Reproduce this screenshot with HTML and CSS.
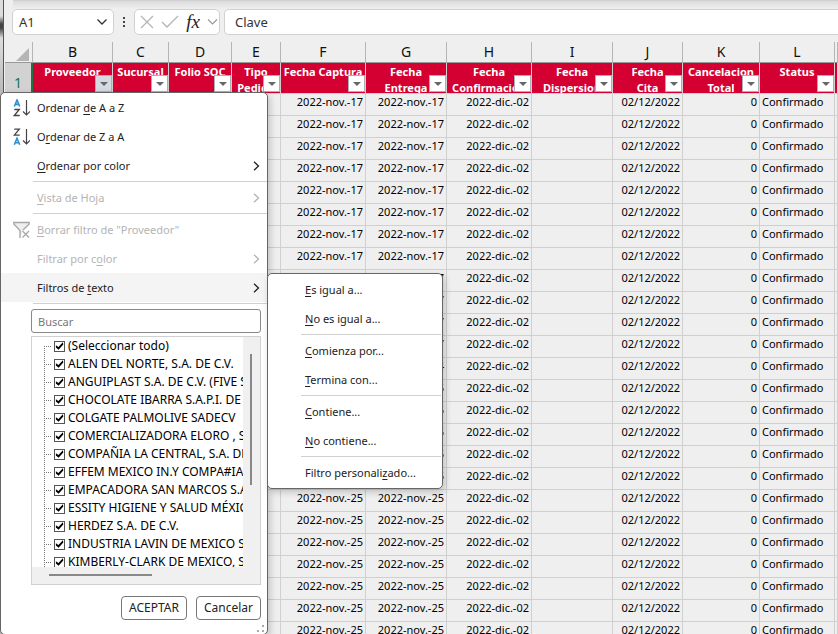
FILE: index.html
```
<!DOCTYPE html>
<html lang="es">
<head>
<meta charset="utf-8">
<title>Clave</title>
<link rel="stylesheet" href="styles.css">
</head>
<body>
<div class="backdrop"></div>
<main class="window">
  <div class="ribbon-edge"></div>
  <div class="formula-row">
    <button class="box name-box" type="button"><span>A1</span>
      <svg width="12" height="8" viewBox="0 0 12 8"><path d="M1.500 1.500 6 6l4.500-4.500" fill="none" stroke="#333" stroke-width="1.300"/></svg>
    </button>
    <svg class="dots" width="4" height="12" viewBox="0 0 4 12"><path d="M1 1h2v2H1zM1 5h2v2H1zM1 9h2v2H1z" fill="#444"/></svg>
    <div class="box fx-box">
      <button type="button" aria-label="Cancelar entrada"><svg width="14" height="14" viewBox="0 0 14 14"><path d="M1 1l12 12M13 1L1 13" stroke="#b4b4b4" stroke-width="1.200"/></svg></button>
      <button type="button" aria-label="Introducir"><svg width="18" height="14" viewBox="0 0 18 14"><path d="M1 7l5 5L17 1" fill="none" stroke="#b4b4b4" stroke-width="1.300"/></svg></button>
      <button type="button" class="fx"><i>fx</i></button>
      <button type="button" aria-label="Más funciones"><svg width="11" height="8" viewBox="0 0 11 8"><path d="M1 1.500l4.500 4.500L10 1.500" fill="none" stroke="#999" stroke-width="1.200"/></svg></button>
    </div>
    <input class="box formula" type="text" value="Clave" aria-label="Barra de fórmulas">
  </div>

  <table class="sheet">
    <colgroup><col class="w28"><col class="w80"><col class="w56"><col class="w63"><col class="w49"><col class="w85"><col class="w81"><col class="w85"><col class="w81"><col class="w70"><col class="w77"><col class="w75"><col></colgroup>
    <thead>
      <tr class="letters"><th><svg class="corner" width="13" height="13" viewBox="0 0 13 13"><path d="M13 0v13H0z" fill="#b5b5b5"/></svg></th><th>B</th><th>C</th><th>D</th><th>E</th><th>F</th><th>G</th><th>H</th><th>I</th><th>J</th><th>K</th><th>L</th><th></th></tr>
      <tr class="titles">
        <th class="rownum">1</th>
        <th><div>Proveedor<button type="button" class="drop active" aria-label="Filtrar"></button></div></th>
        <th><div>Sucursal<button type="button" class="drop" aria-label="Filtrar"></button></div></th>
        <th><div>Folio SOC<button type="button" class="drop" aria-label="Filtrar"></button></div></th>
        <th><div>Tipo<br>Pedido<button type="button" class="drop" aria-label="Filtrar"></button></div></th>
        <th><div>Fecha Captura<button type="button" class="drop" aria-label="Filtrar"></button></div></th>
        <th><div>Fecha<br>Entrega<button type="button" class="drop" aria-label="Filtrar"></button></div></th>
        <th><div>Fecha<br>Confirmacion<button type="button" class="drop" aria-label="Filtrar"></button></div></th>
        <th><div>Fecha<br>Dispersion<button type="button" class="drop" aria-label="Filtrar"></button></div></th>
        <th><div>Fecha<br>Cita<button type="button" class="drop" aria-label="Filtrar"></button></div></th>
        <th><div>Cancelacion<br>Total<button type="button" class="drop" aria-label="Filtrar"></button></div></th>
        <th><div>Status<button type="button" class="drop" aria-label="Filtrar"></button></div></th>
        <th></th>
      </tr>
    </thead>
    <tbody>
      <tr><td><td><td><td><td><td>2022-nov.-17<td>2022-nov.-17<td>2022-dic.-02<td><td>02/12/2022<td>0<td>Confirmado<td></tr>
      <tr><td><td><td><td><td><td>2022-nov.-17<td>2022-nov.-17<td>2022-dic.-02<td><td>02/12/2022<td>0<td>Confirmado<td></tr>
      <tr><td><td><td><td><td><td>2022-nov.-17<td>2022-nov.-17<td>2022-dic.-02<td><td>02/12/2022<td>0<td>Confirmado<td></tr>
      <tr><td><td><td><td><td><td>2022-nov.-17<td>2022-nov.-17<td>2022-dic.-02<td><td>02/12/2022<td>0<td>Confirmado<td></tr>
      <tr><td><td><td><td><td><td>2022-nov.-17<td>2022-nov.-17<td>2022-dic.-02<td><td>02/12/2022<td>0<td>Confirmado<td></tr>
      <tr><td><td><td><td><td><td>2022-nov.-17<td>2022-nov.-17<td>2022-dic.-02<td><td>02/12/2022<td>0<td>Confirmado<td></tr>
      <tr><td><td><td><td><td><td>2022-nov.-17<td>2022-nov.-17<td>2022-dic.-02<td><td>02/12/2022<td>0<td>Confirmado<td></tr>
      <tr><td><td><td><td><td><td>2022-nov.-17<td>2022-nov.-17<td>2022-dic.-02<td><td>02/12/2022<td>0<td>Confirmado<td></tr>
      <tr><td><td><td><td><td><td><td>2022-nov.-17<td>2022-dic.-02<td><td>02/12/2022<td>0<td>Confirmado<td></tr>
      <tr><td><td><td><td><td><td><td>2022-nov.-17<td>2022-dic.-02<td><td>02/12/2022<td>0<td>Confirmado<td></tr>
      <tr><td><td><td><td><td><td><td>2022-nov.-17<td>2022-dic.-02<td><td>02/12/2022<td>0<td>Confirmado<td></tr>
      <tr><td><td><td><td><td><td><td>2022-nov.-17<td>2022-dic.-02<td><td>02/12/2022<td>0<td>Confirmado<td></tr>
      <tr><td><td><td><td><td><td><td>2022-nov.-24<td>2022-dic.-02<td><td>02/12/2022<td>0<td>Confirmado<td></tr>
      <tr><td><td><td><td><td><td><td>2022-nov.-25<td>2022-dic.-02<td><td>02/12/2022<td>0<td>Confirmado<td></tr>
      <tr><td><td><td><td><td><td><td>2022-nov.-25<td>2022-dic.-02<td><td>02/12/2022<td>0<td>Confirmado<td></tr>
      <tr><td><td><td><td><td><td><td>2022-nov.-25<td>2022-dic.-02<td><td>02/12/2022<td>0<td>Confirmado<td></tr>
      <tr><td><td><td><td><td><td><td>2022-nov.-25<td>2022-dic.-02<td><td>02/12/2022<td>0<td>Confirmado<td></tr>
      <tr><td><td><td><td><td><td><td>2022-nov.-25<td>2022-dic.-02<td><td>02/12/2022<td>0<td>Confirmado<td></tr>
      <tr><td><td><td><td><td><td>2022-nov.-25<td>2022-nov.-25<td>2022-dic.-02<td><td>02/12/2022<td>0<td>Confirmado<td></tr>
      <tr><td><td><td><td><td><td>2022-nov.-25<td>2022-nov.-25<td>2022-dic.-02<td><td>02/12/2022<td>0<td>Confirmado<td></tr>
      <tr><td><td><td><td><td><td>2022-nov.-25<td>2022-nov.-25<td>2022-dic.-02<td><td>02/12/2022<td>0<td>Confirmado<td></tr>
      <tr><td><td><td><td><td><td>2022-nov.-25<td>2022-nov.-25<td>2022-dic.-02<td><td>02/12/2022<td>0<td>Confirmado<td></tr>
      <tr><td><td><td><td><td><td>2022-nov.-25<td>2022-nov.-25<td>2022-dic.-02<td><td>02/12/2022<td>0<td>Confirmado<td></tr>
      <tr><td><td><td><td><td><td>2022-nov.-25<td>2022-nov.-25<td>2022-dic.-02<td><td>02/12/2022<td>0<td>Confirmado<td></tr>
      <tr><td><td><td><td><td><td>2022-nov.-25<td>2022-nov.-25<td>2022-dic.-02<td><td>02/12/2022<td>0<td>Confirmado<td></tr>
    </tbody>
  </table>
</main>

<section class="popup filter-menu">
  <button type="button" class="item"><svg class="icon" width="17" height="18" viewBox="0 0 17 18"><path d="M1.300 7.500 4 1l2.700 6.500M2.200 5.400h3.600" fill="none" stroke="#2b8fd0" stroke-width="1.600"/><path d="M1.300 10.500h5L1.300 16.500h5.400" fill="none" stroke="#444" stroke-width="1.300"/><path d="M13.500 1v15M10 12.500l3.500 3.500 3.500-3.500" fill="none" stroke="#444" stroke-width="1.200"/></svg><span>Ordenar <u>d</u>e A a Z</span></button>
  <button type="button" class="item"><svg class="icon" width="17" height="18" viewBox="0 0 17 18"><path d="M1.300 1.200h5L1.300 7.200h5.400" fill="none" stroke="#444" stroke-width="1.300"/><path d="M1.300 16.800 4 10.300l2.700 6.500M2.200 14.700h3.600" fill="none" stroke="#2b8fd0" stroke-width="1.600"/><path d="M13.500 1v15M10 12.500l3.500 3.500 3.500-3.500" fill="none" stroke="#444" stroke-width="1.200"/></svg><span>O<u>r</u>denar de Z a A</span></button>
  <button type="button" class="item"><span><u>O</u>rdenar por color</span><svg class="more" width="7" height="10" viewBox="0 0 7 10"><path d="M1 .8 5.500 5 1 9.200" fill="none" stroke="currentColor" stroke-width="1.300"/></svg></button>
  <hr>
  <button type="button" class="item" disabled><span><u>V</u>ista de Hoja</span><svg class="more" width="7" height="10" viewBox="0 0 7 10"><path d="M1 .8 5.500 5 1 9.200" fill="none" stroke="currentColor" stroke-width="1.300"/></svg></button>
  <hr>
  <button type="button" class="item" disabled><svg class="icon" width="17" height="18" viewBox="0 0 17 18"><path d="M7 17V9.500L.8 3V1.500h15.400V3L10 9" fill="#eee" stroke="#a6a6a6" stroke-width="1.300"/><path d="M9.500 10l6.500 6.500M16 10l-6.500 6.500" fill="none" stroke="#a6a6a6" stroke-width="1.200"/></svg><span><u>B</u>orrar filtro de "Proveedor"</span></button>
  <button type="button" class="item" disabled><span>Filtrar por c<u>o</u>lor</span><svg class="more" width="7" height="10" viewBox="0 0 7 10"><path d="M1 .8 5.500 5 1 9.200" fill="none" stroke="currentColor" stroke-width="1.300"/></svg></button>
  <button type="button" class="item current"><span>Filtros de <u>t</u>exto</span><svg class="more" width="7" height="10" viewBox="0 0 7 10"><path d="M1 .8 5.500 5 1 9.200" fill="none" stroke="currentColor" stroke-width="1.300"/></svg></button>
  <hr>
  <div class="values">
    <input class="search" type="text" placeholder="Buscar" aria-label="Buscar">
    <div class="list">
      <div class="tree">
        <label><input type="checkbox" checked>(Seleccionar todo)</label>
        <label><input type="checkbox" checked>ALEN DEL NORTE, S.A. DE C.V.</label>
        <label><input type="checkbox" checked>ANGUIPLAST S.A. DE C.V. (FIVE STAR)</label>
        <label><input type="checkbox" checked>CHOCOLATE IBARRA S.A.P.I. DE C.V.</label>
        <label><input type="checkbox" checked>COLGATE PALMOLIVE SADECV</label>
        <label><input type="checkbox" checked>COMERCIALIZADORA ELORO , S.A.</label>
        <label><input type="checkbox" checked>COMPAÑIA LA CENTRAL, S.A. DE C.V.</label>
        <label><input type="checkbox" checked>EFFEM MEXICO IN.Y COMPA#IA</label>
        <label><input type="checkbox" checked>EMPACADORA SAN MARCOS S.A.</label>
        <label><input type="checkbox" checked>ESSITY HIGIENE Y SALUD MÉXICO</label>
        <label><input type="checkbox" checked>HERDEZ S.A. DE C.V.</label>
        <label><input type="checkbox" checked>INDUSTRIA LAVIN DE MEXICO S.A.</label>
        <label><input type="checkbox" checked>KIMBERLY-CLARK DE MEXICO, S.A.</label>
      </div>
      <div class="vbar"><span></span></div>
      <div class="hbar"><span></span></div>
    </div>
    <div class="actions"><button type="button">ACEPTAR</button><button type="button">Cancelar</button></div>
  </div>
  <svg class="grip" width="8" height="8" viewBox="0 0 8 8"><path d="M5 0h2v2H5zM0 5h2v2H0zM5 5h2v2H5z" fill="#aaa"/></svg>
</section>

<section class="popup text-menu">
  <button type="button" class="item"><span><u>E</u>s igual a...</span></button>
  <button type="button" class="item"><span><u>N</u>o es igual a...</span></button>
  <hr>
  <button type="button" class="item"><span><u>C</u>omienza por...</span></button>
  <button type="button" class="item"><span><u>T</u>ermina con...</span></button>
  <hr>
  <button type="button" class="item"><span><u>C</u>ontiene...</span></button>
  <button type="button" class="item"><span><u>N</u>o contiene...</span></button>
  <hr>
  <button type="button" class="item"><span>Filtro personali<u>z</u>ado...</span></button>
</section>
</body>
</html>
```
FILE: styles.css
```
* { box-sizing: border-box; }
body {
  margin: 0;
  height: 100vh;
  overflow: hidden;
  position: relative;
  display: flex;
  background: #efefef;
  color: #111;
  font: 12px/16px "Noto Sans", "Open Sans", sans-serif;
}
button, input { font: inherit; color: inherit; margin: 0; }
button { border: 0; padding: 0; background: none; }
svg { display: block; flex: none; }

.backdrop {
  flex: none;
  width: 3px;
  background: linear-gradient(#ddd 0, #ddd 16px, #444 24px, #444 28px, #ddd 38px, #bbb 90px);
}
.window { flex: 1; min-width: 0; border-left: 1px solid #217346; padding-left: 1px; }
.ribbon-edge {
  height: 9px;
  margin-left: 8px;
  border-top: 1px solid #d0d0d0;
  background: linear-gradient(#dcdcdc, #efefef);
}
.formula-row { display: flex; align-items: center; height: 26px; padding-left: 7px; }
.box {
  height: 26px;
  border: 1px solid #d1d1d1;
  border-radius: 5px;
  background: #fff;
  display: flex;
  align-items: center;
}
.name-box { width: 102px; padding: 0 5px 0 6px; justify-content: space-between; font-size: 13px; color: #333; }
.dots { margin: 0 8px; }
.fx-box { width: 86px; padding: 0 1px 0 5px; justify-content: space-between; }
.fx { font: 19px/20px "Liberation Serif", serif; color: #222; }
.formula { flex: 1; min-width: 0; margin-left: 4px; padding: 0 10px; border-right: 0; border-radius: 5px 0 0 5px; font-size: 13px; color: #333; }

.sheet { width: 100%; margin-top: 7px; table-layout: fixed; border-collapse: separate; border-spacing: 0; }
.w28 { width: 28px; } .w80 { width: 80px; } .w56 { width: 56px; } .w63 { width: 63px; }
.w49 { width: 49px; } .w85 { width: 85px; } .w81 { width: 81px; } .w70 { width: 70px; }
.w77 { width: 77px; } .w75 { width: 75px; }
.sheet th, .sheet td { padding: 0; border-right: 1px solid #d0d0d0; border-bottom: 1px solid #d0d0d0; }
.letters th { height: 21px; font-weight: 400; font-size: 14px; line-height: 20px; border-right-color: #b5b5b5; border-bottom-color: #999; }
.corner { margin: 4px 3px 0 auto; }
.titles th { height: 31px; background: #d40032; color: #fff; font-size: 11px; font-weight: 700; vertical-align: top; }
.titles div { position: relative; height: 30px; overflow: hidden; padding-top: 1px; white-space: nowrap; display: flow-root; }
.titles .rownum {
  background: #d2d2d2;
  color: #217346;
  border-right: 2px solid #217346;
  font-size: 14px;
  font-weight: 400;
  vertical-align: bottom;
  line-height: 20px;
}
.drop {
  position: absolute;
  right: 0;
  bottom: 1px;
  width: 17px;
  height: 17px;
  border: 1px solid #abb0b8;
  background: #fff;
}
.drop.active { background: #d5d9e2; }
.drop::after {
  content: "";
  position: absolute;
  left: 4px;
  top: 6px;
  border: 4px solid transparent;
  border-top-color: #666;
  border-bottom: 0;
}
.sheet td { height: 22px; padding: 0 2px; font-size: 11px; vertical-align: top; text-align: right; white-space: nowrap; overflow: hidden; color: #000; }
.sheet td:nth-child(12) { text-align: left; }

.popup { position: absolute; background: #fff; border: 1px solid #666; border-radius: 5px; box-shadow: 2px 3px 7px #0003; }
.item {
  display: flex;
  align-items: center;
  width: 100%;
  height: 29px;
  padding-right: 7px;
  font-size: 11px;
  text-align: left;
  color: #222;
}
.item span { margin-left: 36px; flex: 1; white-space: nowrap; }
.item u { text-underline-offset: 2px; }
.item:disabled { color: #b4b4b4; }
.icon { margin-left: 12px; }
.item .icon + span { margin-left: 7px; }
.current { background: #f4f4f4; }
.popup hr { height: 1px; margin: 1px 0 1px 32px; border: 0; background: #d0d0d0; }

.filter-menu { left: 0; top: 92px; width: 268px; }
.values { padding: 4px 6px 14px 30px; }
.search { display: block; width: 100%; height: 24px; padding: 0 6px; border: 1px solid #888; border-radius: 3px; background: #fff; font-size: 11px; }
.search::placeholder { color: #777; opacity: 1; }
.list {
  display: grid;
  grid-template: 230px 17px / 1fr 17px;
  margin-top: 3px;
  border: 1px solid #d0d0d0;
  background: #fff;
}
.tree { position: relative; overflow: hidden; padding-left: 12px; }
.tree::before { content: ""; position: absolute; left: 12px; top: 9px; bottom: 0; border-left: 1px dotted #777; }
.tree label { display: flex; align-items: center; gap: 3px; height: 18px; font-size: 12px; white-space: nowrap; color: #000; }
.tree label::before { content: ""; flex: none; width: 7px; border-top: 1px dotted #777; }
.tree input {
  appearance: none;
  flex: none;
  width: 11px;
  height: 11px;
  border: 1px solid #555;
  background: #fff;
}
.tree input::after {
  content: "";
  display: block;
  height: 9px;
  background: #000;
  clip-path: polygon(10% 42%, 38% 62%, 88% 8%, 92% 34%, 40% 92%, 10% 68%);
}
.vbar { background: #f0f0f0; padding: 17px 0 0 7px; }
.vbar span { display: block; width: 2px; height: 131px; background: #888; }
.hbar { grid-column: 1 / 3; background: #f0f0f0; padding: 7px 0 0 17px; }
.hbar span { display: block; width: 103px; height: 2px; background: #888; }
.actions { display: flex; justify-content: flex-end; gap: 9px; margin-top: 11px; }
.actions button { height: 24px; padding: 0 7px; border: 1px solid #777; border-radius: 4px; background: #fff; font-size: 12px; color: #222; }
.grip { position: absolute; right: 2px; bottom: 1px; }

.text-menu { left: 267px; top: 273px; width: 176px; padding: 1px; }
.text-menu hr { margin-right: 0; }
```
